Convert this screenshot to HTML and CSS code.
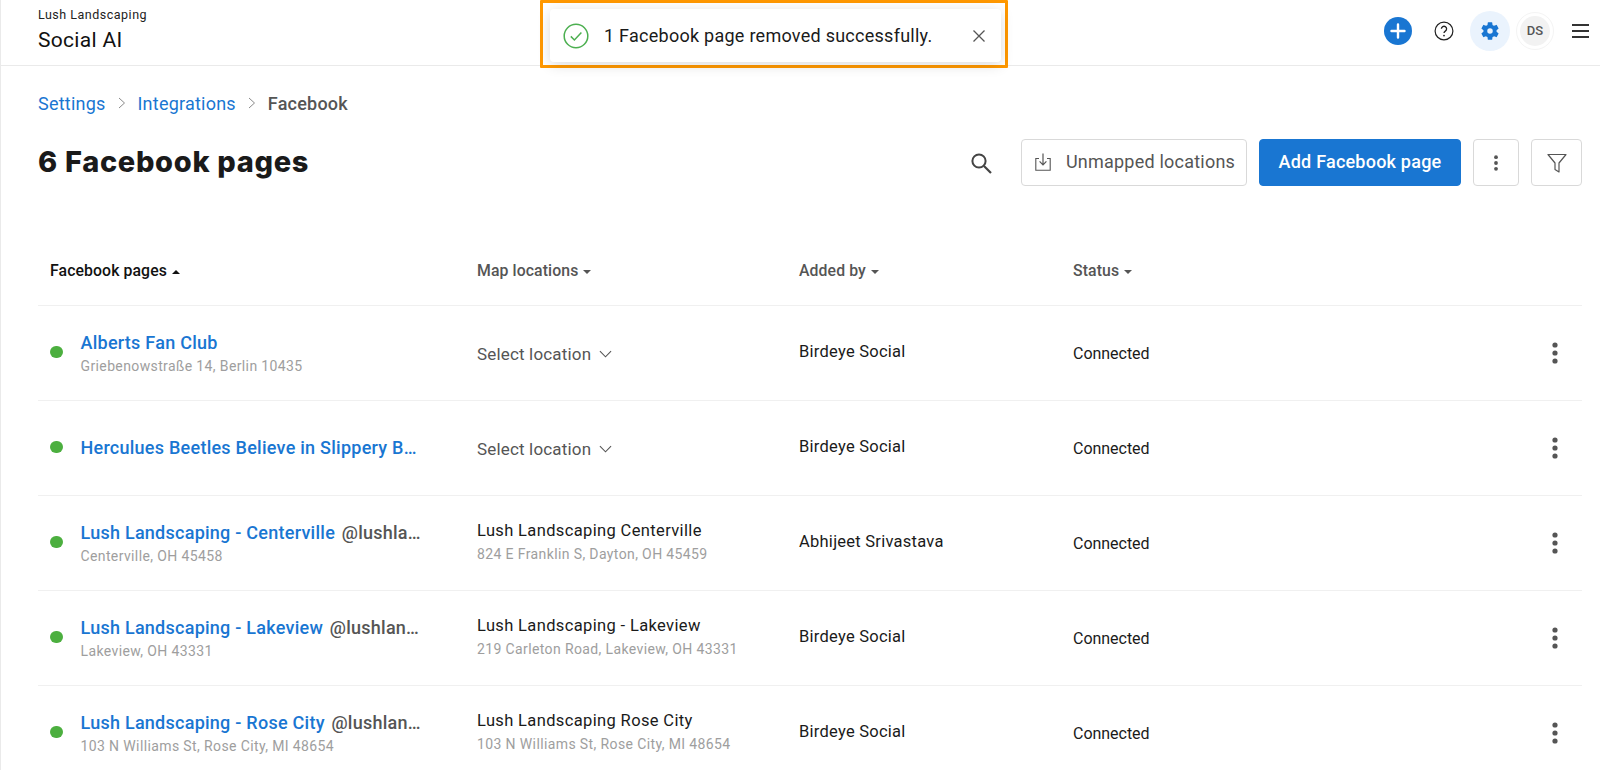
FILE: index.html
```html
<!DOCTYPE html>
<html lang="en">
<head>
<meta charset="utf-8">
<title>Facebook pages</title>
<link rel="stylesheet" href="styles.css">
</head>
<body>
<div class="page">
  <header class="topbar">
    <div class="brand">
      <div class="brand-org">Lush Landscaping</div>
      <div class="brand-app">Social AI</div>
    </div>
    <div class="top-actions">
      <span class="plus"><svg viewBox="0 0 28 28" width="28" height="28"><path d="M14 7.5v13M7.5 14h13" stroke="#fff" stroke-width="2.4" stroke-linecap="round"/></svg></span>
      <span class="help"><svg viewBox="0 0 20 20" width="20" height="20"><circle cx="10" cy="10" r="8.9" fill="none" stroke="#222" stroke-width="1.2"/><path d="M7.4 7.8a2.6 2.6 0 1 1 3.9 2.3c-.8.5-1.3 1-1.3 2" fill="none" stroke="#222" stroke-width="1.3"/><circle cx="10" cy="14.6" r=".9" fill="#222"/></svg></span>
      <span class="gear"><svg viewBox="0 0 24 24" width="22" height="22"><path fill="#1976d2" fill-rule="evenodd" d="M19.14 12.94c.04-.3.06-.61.06-.94s-.02-.64-.07-.94l2.03-1.58a.49.49 0 0 0 .12-.61l-1.92-3.32a.49.49 0 0 0-.59-.22l-2.39.96a7 7 0 0 0-1.62-.94l-.36-2.54a.48.48 0 0 0-.48-.41h-3.84a.48.48 0 0 0-.47.41l-.36 2.54c-.59.24-1.13.57-1.62.94l-2.39-.96a.48.48 0 0 0-.59.22L2.74 8.87a.48.48 0 0 0 .12.61l2.03 1.58c-.05.3-.09.63-.09.94s.02.64.07.94l-2.03 1.58a.49.49 0 0 0-.12.61l1.92 3.32c.12.22.37.29.59.22l2.39-.96c.5.38 1.03.7 1.62.94l.36 2.54c.05.24.24.41.48.41h3.84c.24 0 .44-.17.47-.41l.36-2.54c.59-.24 1.13-.56 1.62-.94l2.39.96c.22.08.47 0 .59-.22l1.92-3.32a.48.48 0 0 0-.12-.61l-2.01-1.58zM12 15a3 3 0 1 1 0-6 3 3 0 0 1 0 6z"/></svg></span>
      <span class="avatar"><span class="avatar-in">DS</span></span>
      <span class="burger"><i></i><i></i><i></i></span>
    </div>
  </header>

  <div class="toast-frame">
    <div class="toast">
      <svg class="toast-check" viewBox="0 0 26 26" width="26" height="26"><circle cx="13" cy="13" r="11.8" fill="none" stroke="#4caf50" stroke-width="1.5"/><path d="M7.8 13.4l3.6 3.6 7-7.4" fill="none" stroke="#4caf50" stroke-width="1.5"/></svg>
      <span class="toast-text">1 Facebook page removed successfully.</span>
      <svg class="toast-x" viewBox="0 0 14 14" width="14" height="14"><path d="M1.5 1.5l11 11M12.5 1.5l-11 11" stroke="#555" stroke-width="1.3"/></svg>
    </div>
  </div>

  <main class="content">
    <nav class="crumbs">
      <a class="crumb-link">Settings</a>
      <svg class="crumb-sep" viewBox="0 0 8 12" width="8" height="12"><path d="M1 1l5.5 5L1 11" fill="none" stroke="#8a8a8a" stroke-width="1"/></svg>
      <a class="crumb-link">Integrations</a>
      <svg class="crumb-sep" viewBox="0 0 8 12" width="8" height="12"><path d="M1 1l5.5 5L1 11" fill="none" stroke="#8a8a8a" stroke-width="1"/></svg>
      <span class="crumb-now">Facebook</span>
    </nav>

    <div class="titlebar">
      <h1 class="title">6 Facebook pages</h1>
      <div class="tools">
        <svg class="search" viewBox="0 0 24 24" width="24" height="24"><circle cx="10" cy="10" r="6.6" fill="none" stroke="#444" stroke-width="2"/><path d="M15 15l7 7" stroke="#444" stroke-width="2.2"/></svg>
        <button class="btn btn-outline"><svg viewBox="0 0 20 20" width="20" height="20"><path d="M6 6.5H2.8v11.7h14.4V6.5H14" fill="none" stroke="#555" stroke-width="1.1"/><path d="M10 1.5v11M6.6 9.4l3.4 3.4 3.4-3.4" fill="none" stroke="#555" stroke-width="1.2"/></svg>Unmapped locations</button>
        <button class="btn btn-primary">Add Facebook page</button>
        <button class="btn btn-icon"><svg viewBox="0 0 4 16" width="4" height="16"><circle cx="2" cy="2.2" r="1.9" fill="#555"/><circle cx="2" cy="8" r="1.9" fill="#555"/><circle cx="2" cy="13.8" r="1.9" fill="#555"/></svg></button>
        <button class="btn btn-icon btn-filter"><svg viewBox="0 0 22 22" width="22" height="22"><path d="M2 2.5h18l-7 8.5v9l-4-2.5V11z" fill="none" stroke="#555" stroke-width="1.2" stroke-linejoin="round"/></svg></button>
      </div>
    </div>

    <div class="table">
      <div class="row head">
        <div class="th th-active">Facebook pages <i class="caret up"></i></div>
        <div class="th">Map locations <i class="caret"></i></div>
        <div class="th">Added by <i class="caret"></i></div>
        <div class="th">Status <i class="caret"></i></div>
      </div>

      <div class="row">
        <div class="page-cell"><span class="dot"></span><div class="page-text"><div class="page-name"><a>Alberts Fan Club</a></div><div class="sub">Griebenowstraße 14, Berlin 10435</div></div></div>
        <div class="select">Select location <svg viewBox="0 0 14 8" width="13" height="8"><path d="M1 1l6 6 6-6" fill="none" stroke="#555" stroke-width="1.2"/></svg></div>
        <div class="adder">Birdeye Social</div>
        <div class="status">Connected</div>
        <svg class="more" viewBox="0 0 6 22" width="6" height="22"><circle cx="3" cy="3" r="2.6"/><circle cx="3" cy="11" r="2.6"/><circle cx="3" cy="19" r="2.6"/></svg>
      </div>

      <div class="row">
        <div class="page-cell"><span class="dot"></span><div class="page-text"><div class="page-name"><a>Herculues Beetles Believe in Slippery B…</a></div></div></div>
        <div class="select">Select location <svg viewBox="0 0 14 8" width="13" height="8"><path d="M1 1l6 6 6-6" fill="none" stroke="#555" stroke-width="1.2"/></svg></div>
        <div class="adder">Birdeye Social</div>
        <div class="status">Connected</div>
        <svg class="more" viewBox="0 0 6 22" width="6" height="22"><circle cx="3" cy="3" r="2.6"/><circle cx="3" cy="11" r="2.6"/><circle cx="3" cy="19" r="2.6"/></svg>
      </div>

      <div class="row">
        <div class="page-cell"><span class="dot"></span><div class="page-text"><div class="page-name"><a>Lush Landscaping - Centerville</a> <span class="handle">@lushla…</span></div><div class="sub">Centerville, OH 45458</div></div></div>
        <div class="mapped"><div class="mapped-name">Lush Landscaping Centerville</div><div class="sub">824 E Franklin S, Dayton, OH 45459</div></div>
        <div class="adder">Abhijeet Srivastava</div>
        <div class="status">Connected</div>
        <svg class="more" viewBox="0 0 6 22" width="6" height="22"><circle cx="3" cy="3" r="2.6"/><circle cx="3" cy="11" r="2.6"/><circle cx="3" cy="19" r="2.6"/></svg>
      </div>

      <div class="row">
        <div class="page-cell"><span class="dot"></span><div class="page-text"><div class="page-name"><a>Lush Landscaping - Lakeview</a> <span class="handle">@lushlan…</span></div><div class="sub">Lakeview, OH 43331</div></div></div>
        <div class="mapped"><div class="mapped-name">Lush Landscaping - Lakeview</div><div class="sub">219 Carleton Road, Lakeview, OH 43331</div></div>
        <div class="adder">Birdeye Social</div>
        <div class="status">Connected</div>
        <svg class="more" viewBox="0 0 6 22" width="6" height="22"><circle cx="3" cy="3" r="2.6"/><circle cx="3" cy="11" r="2.6"/><circle cx="3" cy="19" r="2.6"/></svg>
      </div>

      <div class="row">
        <div class="page-cell"><span class="dot"></span><div class="page-text"><div class="page-name"><a>Lush Landscaping - Rose City</a> <span class="handle">@lushlan…</span></div><div class="sub">103 N Williams St, Rose City, MI 48654</div></div></div>
        <div class="mapped"><div class="mapped-name">Lush Landscaping Rose City</div><div class="sub">103 N Williams St, Rose City, MI 48654</div></div>
        <div class="adder">Birdeye Social</div>
        <div class="status">Connected</div>
        <svg class="more" viewBox="0 0 6 22" width="6" height="22"><circle cx="3" cy="3" r="2.6"/><circle cx="3" cy="11" r="2.6"/><circle cx="3" cy="19" r="2.6"/></svg>
      </div>
    </div>
  </main>
</div>
</body>
</html>
```
FILE: styles.css
```css
* { box-sizing: border-box; }
html, body { margin: 0; padding: 0; height: 770px; overflow: hidden; background: #fff; }
body { font-family: Roboto, "Liberation Sans", sans-serif; color: #1a1a1a; }
.page { position: relative; height: 770px; border-left: 1px solid #eaeaea; }

.topbar { height: 66px; border-bottom: 1px solid #eaeaea; display: flex; justify-content: space-between; padding: 0 11px 0 37px; }
.brand { padding-top: 7px; }
.brand-org { font-size: 12.5px; line-height: 16px; letter-spacing: .5px; color: #222; }
.brand-app { font-size: 21px; line-height: 26px; margin-top: 4px; letter-spacing: .3px; color: #111; }
.top-actions { display: flex; align-items: center; height: 61px; }
.plus { width: 28px; height: 28px; border-radius: 50%; background: #1976d2; display: block; }
.plus svg, .help svg, .gear svg { display: block; }
.help { margin-left: 22px; width: 20px; height: 20px; }
.gear { margin-left: 16px; width: 40px; height: 40px; border-radius: 50%; background: #eaf3fd; display: flex; align-items: center; justify-content: center; }
.avatar { margin-left: 6px; width: 38px; height: 38px; border-radius: 50%; border: 1px solid #f4f4f4; display: flex; align-items: center; justify-content: center; }
.avatar-in { width: 30px; height: 30px; border-radius: 50%; background: #f2f2f2; font-size: 13px; font-weight: 500; color: #555; display: flex; align-items: center; justify-content: center; }
.burger { margin-left: 18px; width: 17px; display: flex; flex-direction: column; gap: 4px; }
.burger i { display: block; height: 2px; background: #333; }

.toast-frame { position: absolute; left: 539px; top: 0; width: 468px; height: 68px; border: 3px solid #ff9800; border-radius: 1px; padding: 6px 4px 3px 7px; }
.toast { height: 100%; background: #fff; border-radius: 4px; display: flex; align-items: center; padding-left: 13px; box-shadow: 0 3px 14px rgba(0,0,0,.14); }
.toast-check { flex: none; }
.toast-text { margin-left: 15px; font-size: 18px; letter-spacing: .26px; color: #1a1a1a; white-space: nowrap; }
.toast-x { margin-left: 40px; flex: none; }

.content { padding: 0 18px 0 37px; }
.crumbs { display: flex; align-items: center; padding-top: 27px; height: 47px; font-size: 18px; letter-spacing: .22px; }
.crumb-link { color: #1976d2; }
.crumb-sep { margin: 0 12px; }
.crumb-now { color: #555; font-weight: 500; }

.titlebar { display: flex; align-items: center; justify-content: space-between; margin-top: 26px; height: 47px; }
.title { margin: -2px 0 0; font-family: Inter, Roboto, sans-serif; font-weight: 800; font-size: 29px; color: #1a1a1a; letter-spacing: .68px; }
.tools { display: flex; align-items: center; }
.search { margin-right: 28px; }
.btn { height: 47px; border-radius: 4px; font-family: inherit; font-size: 18px; letter-spacing: .22px; display: flex; align-items: center; justify-content: center; padding: 0 0 2px; margin-left: 12px; }
.btn-outline { margin-left: 0; width: 226px; background: #fff; border: 1px solid #d9d9d9; color: #555; gap: 13px; }
.btn-primary { width: 202px; background: #1976d2; border: 1px solid #1976d2; color: #fff; font-weight: 500; }
.btn-icon { width: 46px; background: #fff; border: 1px solid #d9d9d9; padding: 0; }
.btn-filter { width: 51px; }

.table { margin-top: 50px; }
.row { display: grid; grid-template-columns: 439px 322px 274px 1fr 30px; height: 95px; align-items: center; border-bottom: 1px solid #f0f0f0; }
.row.head { grid-template-columns: 439px 322px 274px 1fr; height: 70px; padding-bottom: 1px; }
.th { font-size: 15.8px; font-weight: 500; letter-spacing: .1px; color: #555; }
.th-active { color: #111; padding-left: 12px; }
.caret { display: inline-block; width: 0; height: 0; border: 4px solid transparent; border-top: 4px solid #555; border-bottom: 0; margin-left: 1px; vertical-align: 2px; }
.caret.up { border-top: 0; border-bottom: 4px solid #111; }

.page-cell { display: flex; align-items: center; padding-left: 12px; min-width: 0; }
.dot { flex: none; width: 12.5px; height: 12.5px; border-radius: 50%; background: #4caf3f; margin-top: -2px; }
.page-text { margin-left: 18px; width: 345px; min-width: 0; }
.page-name { font-size: 18px; line-height: 24px; font-weight: 500; letter-spacing: .25px; white-space: nowrap; color: #555; }
.page-name a { color: #1976d2; }
.handle { color: #555; margin-left: 2px; }
.sub { font-size: 14px; line-height: 20px; letter-spacing: .38px; color: #9e9e9e; margin-top: 1px; white-space: nowrap; }
.select { font-size: 17px; letter-spacing: .17px; color: #555; display: flex; align-items: center; gap: 8px; margin-top: 1px; }
.mapped { margin-top: -2px; }
.mapped-name { font-size: 16.5px; line-height: 22px; letter-spacing: .36px; color: #1a1a1a; }
.mapped .sub { margin-top: 2px; }
.adder { font-size: 16.5px; letter-spacing: .25px; color: #1a1a1a; margin-top: -4px; }
.status { font-size: 16px; letter-spacing: -.03px; color: #1a1a1a; margin-top: 1px; }
.more { fill: #555; }
```
